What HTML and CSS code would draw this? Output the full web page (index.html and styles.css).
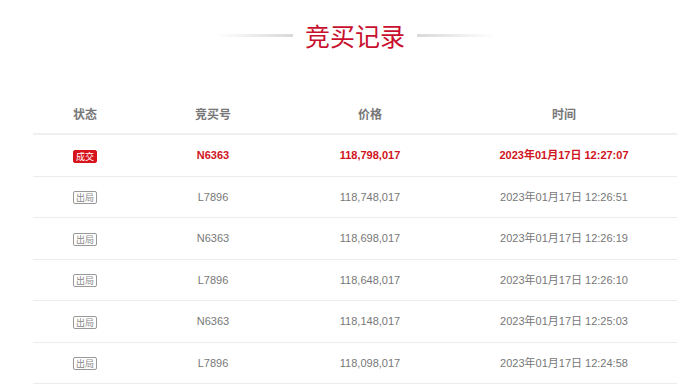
FILE: index.html
```html
<!DOCTYPE html>
<html lang="zh-CN">
<head>
<meta charset="utf-8">
<link rel="stylesheet" href="styles.css">
</head>
<body>
<div class="page">
  <div class="title-row">
    <span class="line line-left"></span>
    <h1 class="title">竞买记录</h1>
    <span class="line line-right"></span>
  </div>
  <div class="table">
    <div class="row head">
      <div class="c1">状态</div><div class="c2">竞买号</div><div class="c3">价格</div><div class="c4">时间</div>
    </div>
    <div class="row win">
      <div class="c1"><span class="badge badge-win">成交</span></div><div class="c2">N6363</div><div class="c3">118,798,017</div><div class="c4">2023年01月17日 12:27:07</div>
    </div>
    <div class="row">
      <div class="c1"><span class="badge">出局</span></div><div class="c2">L7896</div><div class="c3">118,748,017</div><div class="c4">2023年01月17日 12:26:51</div>
    </div>
    <div class="row">
      <div class="c1"><span class="badge">出局</span></div><div class="c2">N6363</div><div class="c3">118,698,017</div><div class="c4">2023年01月17日 12:26:19</div>
    </div>
    <div class="row">
      <div class="c1"><span class="badge">出局</span></div><div class="c2">L7896</div><div class="c3">118,648,017</div><div class="c4">2023年01月17日 12:26:10</div>
    </div>
    <div class="row">
      <div class="c1"><span class="badge">出局</span></div><div class="c2">N6363</div><div class="c3">118,148,017</div><div class="c4">2023年01月17日 12:25:03</div>
    </div>
    <div class="row">
      <div class="c1"><span class="badge">出局</span></div><div class="c2">L7896</div><div class="c3">118,098,017</div><div class="c4">2023年01月17日 12:24:58</div>
    </div>
  </div>
</div>
</body>
</html>
```
FILE: styles.css
```css
html, body {
  margin: 0;
  padding: 0;
  background: #fff;
}
body {
  font-family: "Liberation Sans", Arial, "Noto Sans CJK SC", sans-serif;
  color: #777;
  font-size: 11px;
}
.page {
  padding: 16px 23px 0 33px;
}
.title-row {
  display: flex;
  align-items: center;
  justify-content: center;
  gap: 12px;
  height: 38px;
}
.title {
  margin: 0;
  font-family: "Noto Sans CJK SC", sans-serif;
  font-weight: 400;
  font-size: 25px;
  line-height: 38px;
  color: #c8102e;
}
.line {
  display: block;
  width: 78px;
  height: 3px;
}
.line-left {
  background: linear-gradient(to right, rgba(220,220,220,0), #d9d9d9);
}
.line-right {
  background: linear-gradient(to left, rgba(220,220,220,0), #d9d9d9);
}
.table {
  margin-top: 43px;
  width: 644px;
}
.row {
  display: grid;
  grid-template-columns: 104px 152px 162px 226px;
  align-items: center;
  height: 41.5px;
  box-sizing: border-box;
  border-bottom: 1px solid #ececec;
  text-align: center;
}
.row.head {
  height: 38px;
  border-bottom: 2px solid #f0f0f0;
  font-weight: bold;
  color: #777;
  font-family: "Noto Sans CJK SC", sans-serif;
  font-size: 12px;
  padding-bottom: 3px;
}
.row > div {
  line-height: 16px;
}
.row.win {
  color: #d0141d;
  font-weight: bold;
}
.badge {
  display: inline-block;
  box-sizing: border-box;
  width: 24px;
  height: 13px;
  line-height: 11px;
  font-size: 9px;
  font-family: "Noto Sans CJK SC", sans-serif;
  font-weight: normal;
  border: 1px solid #999;
  border-radius: 2px;
  color: #888;
  vertical-align: middle;
}
.badge-win {
  background: #d7141c;
  border-color: #d7141c;
  color: #fff;
}
```
